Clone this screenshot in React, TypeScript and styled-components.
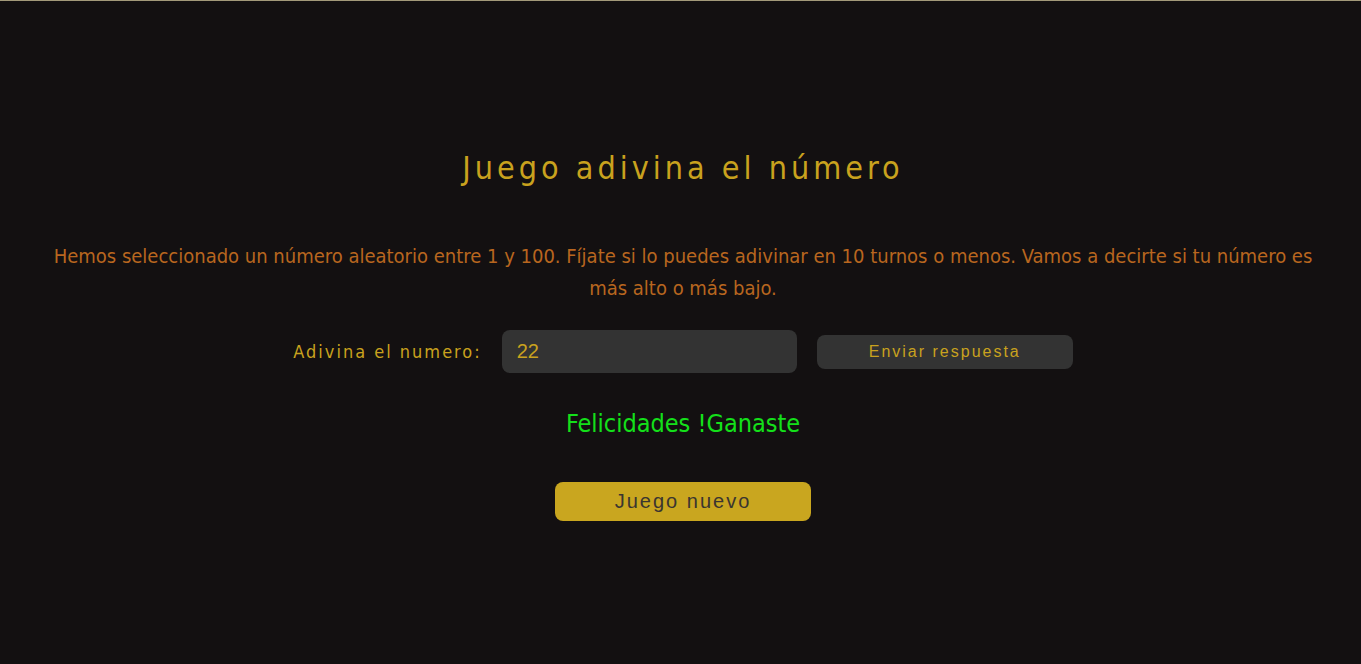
import React from "react";
import styled, { createGlobalStyle } from "styled-components";

const Global = createGlobalStyle`
  html, body { margin: 0; padding: 0; background: #131011; }
  body { border-top: 1px solid #a39a7a; min-height: 663px; }
`;

const Page = styled.main`
  display: flex;
  flex-direction: column;
  align-items: center;
  padding: 143px 38px 0 43px;
  font-family: "Liberation Sans Narrow", "DejaVu Sans Condensed", "Liberation Sans", sans-serif;
`;

const Title = styled.h1`
  margin: 0;
  font-weight: 400;
  font-size: 32px;
  letter-spacing: 4px;
  color: #c9a21e;
  line-height: 48px;
`;

const Intro = styled.p`
  margin: 48px 0 0;
  font-size: 20px;
  line-height: 32px;
  text-align: center;
  color: #b8661f;
`;

const Form = styled.div`
  display: flex;
  align-items: center;
  margin-top: 26px;
  gap: 20px;
`;

const Label = styled.label`
  font-size: 18px;
  letter-spacing: 2px;
  color: #c9a21e;
`;

const Input = styled.input`
  width: 295px;
  height: 43px;
  box-sizing: border-box;
  border: none;
  border-radius: 8px;
  background: #333333;
  color: #c9a21e;
  padding: 0 15px;
  font-family: "Liberation Sans", Arial, sans-serif;
  font-size: 20px;
  outline: none;
`;

const Button = styled.button<{ $primary?: boolean }>`
  width: 256px;
  height: ${(p) => (p.$primary ? "39px" : "34px")};
  border: none;
  border-radius: 8px;
  background: ${(p) => (p.$primary ? "#c9a61f" : "#333333")};
  color: ${(p) => (p.$primary ? "#3a3530" : "#c9a21e")};
  font-family: "Liberation Sans", Arial, sans-serif;
  font-size: ${(p) => (p.$primary ? "20px" : "16px")};
  letter-spacing: 2px;
  cursor: pointer;
`;

const Result = styled.p`
  margin: 33px 0 0;
  font-size: 25px;
  line-height: 36px;
  color: #14e01a;
`;

const NewGame = styled.div`
  margin-top: 40px;
`;

export default function App() {
  return (
    <>
      <Global />
      <Page>
        <Title>Juego adivina el número</Title>
        <Intro>
          Hemos seleccionado un número aleatorio entre 1 y 100. Fíjate si lo puedes adivinar en 10 turnos o menos.
          Vamos a decirte si tu número es más alto o más bajo.
        </Intro>
        <Form>
          <Label htmlFor="guess">Adivina el numero:</Label>
          <Input id="guess" type="text" defaultValue="22" />
          <Button>Enviar respuesta</Button>
        </Form>
        <Result>Felicidades !Ganaste</Result>
        <NewGame>
          <Button $primary>Juego nuevo</Button>
        </NewGame>
      </Page>
    </>
  );
}
